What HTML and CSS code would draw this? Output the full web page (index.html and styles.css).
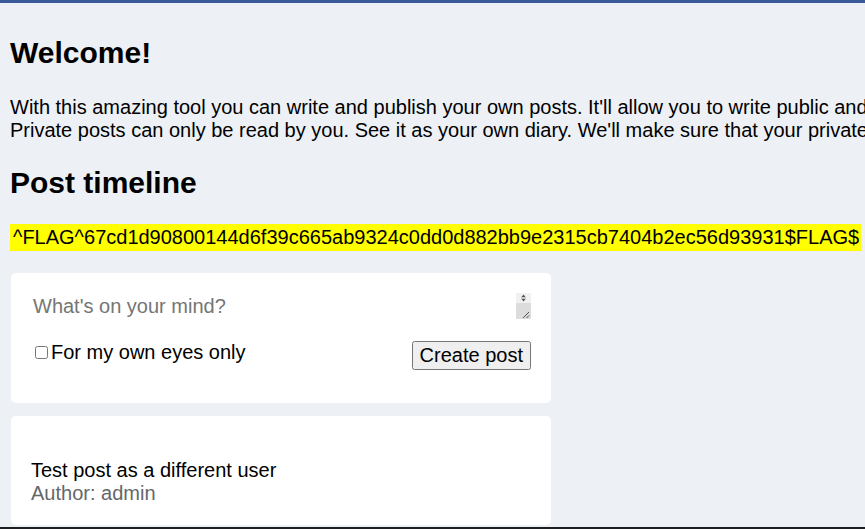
FILE: index.html
```html
<!DOCTYPE html>
<html lang="en">
<head>
<meta charset="utf-8">
<title>Post timeline</title>
<link rel="stylesheet" href="styles.css">
</head>
<body>
<div class="topbar"></div>
<main class="page">
  <h1 class="title">Welcome!</h1>
  <p class="intro">With this amazing tool you can write and publish your own posts. It'll allow you to write public and private posts. Public posts can be read by anyone that signs up.<br>Private posts can only be read by you. See it as your own diary. We'll make sure that your private posts are safe with us.</p>
  <h2 class="subtitle">Post timeline</h2>
  <div class="flag-row"><span class="flag">^FLAG^67cd1d90800144d6f39c665ab9324c0dd0d882bb9e2315cb7404b2ec56d93931$FLAG$</span></div>
  <form class="card composer">
    <div class="composer-field">
      <textarea class="composer-input" placeholder="What's on your mind?"></textarea>
      <div class="scrollbar" aria-hidden="true">
        <div class="scroll-arrows">
          <svg width="15" height="10" viewBox="0 0 15 10"><path d="M5.5 4 L7.5 1.5 L9.5 4 Z" fill="#505050"/><rect x="5" y="4.5" width="5" height="1" fill="#a0a0a0"/><path d="M5.5 6 L7.5 8.5 L9.5 6 Z" fill="#505050"/></svg>
        </div>
        <div class="scroll-corner">
          <svg width="15" height="16" viewBox="0 0 15 16"><path d="M13 9 L7 15 M13 12.5 L10.5 15" stroke="#505050" stroke-width="1" fill="none"/></svg>
        </div>
      </div>
    </div>
    <div class="composer-row">
      <label class="private"><input type="checkbox" class="private-box">For my own eyes only</label>
      <button type="button" class="create-btn">Create post</button>
    </div>
  </form>
  <div class="card post">
    <div class="post-title"></div>
    <div class="post-body">Test post as a different user</div>
    <div class="post-author">Author: admin</div>
  </div>
</main>
<div class="bottom-edge"></div>
</body>
</html>
```
FILE: styles.css
```css
html, body {
  margin: 0;
  padding: 0;
}
body {
  background: #edf0f5;
  font-family: "Liberation Sans", Arial, sans-serif;
  font-size: 20px;
  color: #000;
  overflow: hidden;
  height: 529px;
}
.topbar {
  height: 3px;
  background: #3b5998;
}
.page {
  padding: 0 10px;
  white-space: nowrap;
}
.title {
  font-size: 30px;
  font-weight: bold;
  margin: 33px 0 0;
  line-height: 34px;
}
.intro {
  margin: 26px 0 0;
  line-height: 23px;
}
.subtitle {
  font-size: 30px;
  font-weight: bold;
  margin: 24px 0 0;
  line-height: 34px;
}
.flag-row {
  margin-top: 24px;
  height: 27px;
}
.flag {
  display: inline-block;
  background: #ffff00;
  padding: 2px 2px 2px 3px;
  line-height: 23px;
}
.card {
  background: #fff;
  border-radius: 5px;
  width: 500px;
  margin-left: 1px;
}
.composer {
  margin-top: 22px;
  padding: 20px 20px 33px;
}
.composer-field {
  display: flex;
  width: 500px;
  height: 26px;
}
.composer-input {
  display: block;
  flex: 1;
  height: 26px;
  box-sizing: border-box;
  border: none;
  padding: 2px;
  font-family: "Liberation Sans", Arial, sans-serif;
  font-size: 20px;
  overflow: hidden;
  resize: none;
  outline: none;
}
.scrollbar {
  width: 15px;
  display: flex;
  flex-direction: column;
}
.scroll-arrows {
  height: 10px;
  background: #f1f1f1;
  display: flex;
}
.scroll-corner {
  height: 16px;
  background: #dcdcdc;
  display: flex;
}
.composer-row {
  margin-top: 22px;
  display: flex;
  justify-content: space-between;
  align-items: flex-start;
}
.private {
  line-height: 23px;
  display: flex;
  align-items: center;
}
.private-box {
  margin: 3px 3px 3px 4px;
  width: 13px;
  height: 13px;
}
.create-btn {
  font-family: "Liberation Sans", Arial, sans-serif;
  font-size: 20px;
  padding: 1px 6px;
  line-height: 23px;
}
.post {
  margin-top: 13px;
  padding: 20px;
  line-height: 23px;
}
.post-title {
  height: 23px;
}
.post-author {
  color: #65676b;
}
.bottom-edge {
  position: fixed;
  left: 0;
  right: 0;
  bottom: 0;
  height: 2px;
  background: #1c1e21;
}
```
